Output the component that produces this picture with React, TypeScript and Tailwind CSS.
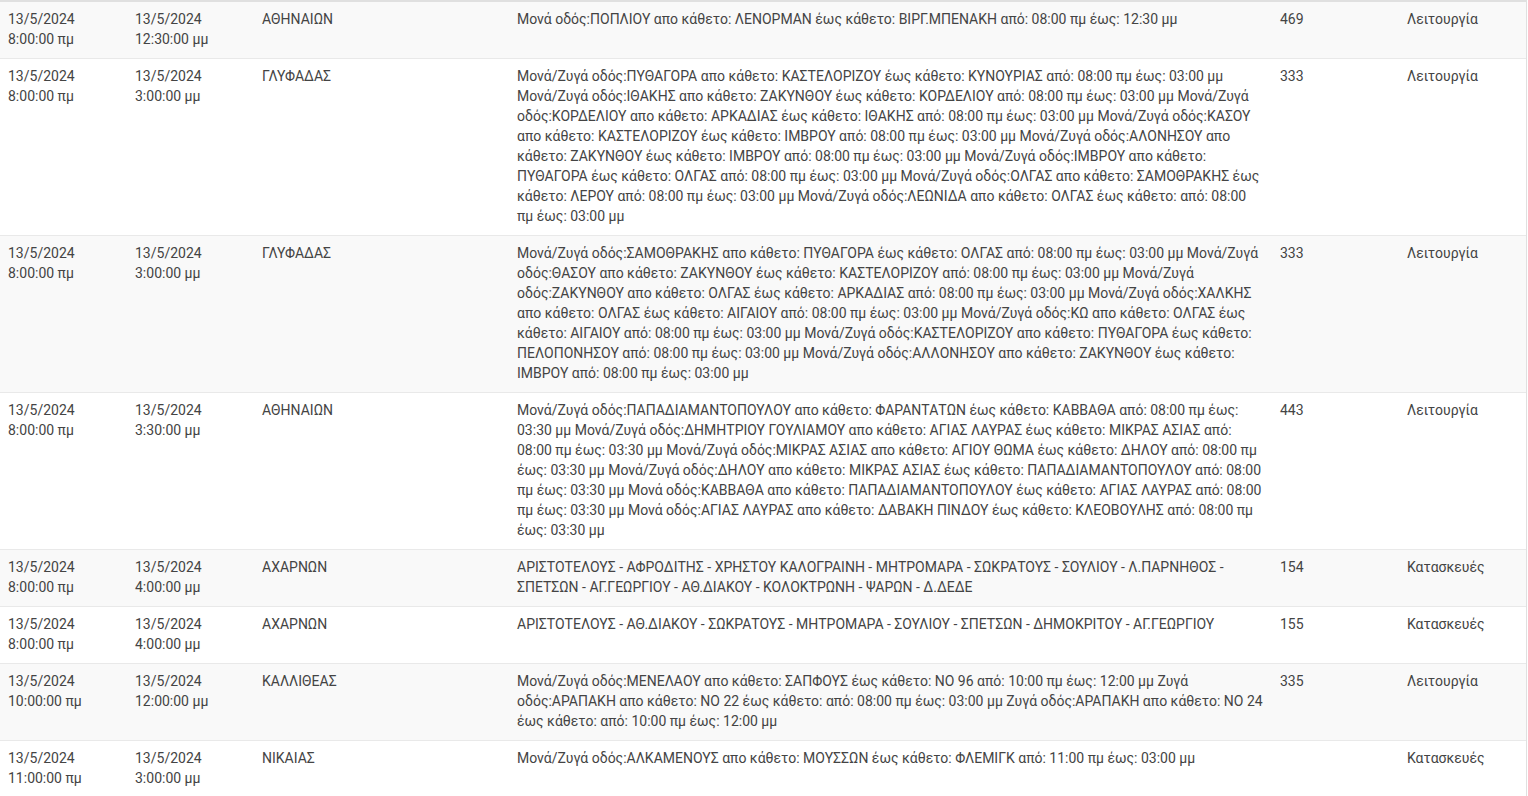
type Row = {
  from: [string, string];
  to: [string, string];
  area: string;
  desc: string;
  num: string;
  kind: string;
};

const rows: Row[] = [
  {
    from: ['13/5/2024', '8:00:00 πμ'],
    to: ['13/5/2024', '12:30:00 μμ'],
    area: 'ΑΘΗΝΑΙΩΝ',
    desc: 'Μονά οδός:ΠΟΠΛΙΟΥ απο κάθετο: ΛΕΝΟΡΜΑΝ έως κάθετο: ΒΙΡΓ.ΜΠΕΝΑΚΗ από: 08:00 πμ έως: 12:30 μμ',
    num: '469',
    kind: 'Λειτουργία',
  },
  {
    from: ['13/5/2024', '8:00:00 πμ'],
    to: ['13/5/2024', '3:00:00 μμ'],
    area: 'ΓΛΥΦΑΔΑΣ',
    desc: 'Μονά/Ζυγά οδός:ΠΥΘΑΓΟΡΑ απο κάθετο: ΚΑΣΤΕΛΟΡΙΖΟΥ έως κάθετο: ΚΥΝΟΥΡΙΑΣ από: 08:00 πμ έως: 03:00 μμ Μονά/Ζυγά οδός:ΙΘΑΚΗΣ απο κάθετο: ΖΑΚΥΝΘΟΥ έως κάθετο: ΚΟΡΔΕΛΙΟΥ από: 08:00 πμ έως: 03:00 μμ Μονά/Ζυγά οδός:ΚΟΡΔΕΛΙΟΥ απο κάθετο: ΑΡΚΑΔΙΑΣ έως κάθετο: ΙΘΑΚΗΣ από: 08:00 πμ έως: 03:00 μμ Μονά/Ζυγά οδός:ΚΑΣΟΥ απο κάθετο: ΚΑΣΤΕΛΟΡΙΖΟΥ έως κάθετο: ΙΜΒΡΟΥ από: 08:00 πμ έως: 03:00 μμ Μονά/Ζυγά οδός:ΑΛΟΝΗΣΟΥ απο κάθετο: ΖΑΚΥΝΘΟΥ έως κάθετο: ΙΜΒΡΟΥ από: 08:00 πμ έως: 03:00 μμ Μονά/Ζυγά οδός:ΙΜΒΡΟΥ απο κάθετο: ΠΥΘΑΓΟΡΑ έως κάθετο: ΟΛΓΑΣ από: 08:00 πμ έως: 03:00 μμ Μονά/Ζυγά οδός:ΟΛΓΑΣ απο κάθετο: ΣΑΜΟΘΡΑΚΗΣ έως κάθετο: ΛΕΡΟΥ από: 08:00 πμ έως: 03:00 μμ Μονά/Ζυγά οδός:ΛΕΩΝΙΔΑ απο κάθετο: ΟΛΓΑΣ έως κάθετο: από: 08:00 πμ έως: 03:00 μμ',
    num: '333',
    kind: 'Λειτουργία',
  },
  {
    from: ['13/5/2024', '8:00:00 πμ'],
    to: ['13/5/2024', '3:00:00 μμ'],
    area: 'ΓΛΥΦΑΔΑΣ',
    desc: 'Μονά/Ζυγά οδός:ΣΑΜΟΘΡΑΚΗΣ απο κάθετο: ΠΥΘΑΓΟΡΑ έως κάθετο: ΟΛΓΑΣ από: 08:00 πμ έως: 03:00 μμ Μονά/Ζυγά οδός:ΘΑΣΟΥ απο κάθετο: ΖΑΚΥΝΘΟΥ έως κάθετο: ΚΑΣΤΕΛΟΡΙΖΟΥ από: 08:00 πμ έως: 03:00 μμ Μονά/Ζυγά οδός:ΖΑΚΥΝΘΟΥ απο κάθετο: ΟΛΓΑΣ έως κάθετο: ΑΡΚΑΔΙΑΣ από: 08:00 πμ έως: 03:00 μμ Μονά/Ζυγά οδός:ΧΑΛΚΗΣ απο κάθετο: ΟΛΓΑΣ έως κάθετο: ΑΙΓΑΙΟΥ από: 08:00 πμ έως: 03:00 μμ Μονά/Ζυγά οδός:ΚΩ απο κάθετο: ΟΛΓΑΣ έως κάθετο: ΑΙΓΑΙΟΥ από: 08:00 πμ έως: 03:00 μμ Μονά/Ζυγά οδός:ΚΑΣΤΕΛΟΡΙΖΟΥ απο κάθετο: ΠΥΘΑΓΟΡΑ έως κάθετο: ΠΕΛΟΠΟΝΗΣΟΥ από: 08:00 πμ έως: 03:00 μμ Μονά/Ζυγά οδός:ΑΛΛΟΝΗΣΟΥ απο κάθετο: ΖΑΚΥΝΘΟΥ έως κάθετο: ΙΜΒΡΟΥ από: 08:00 πμ έως: 03:00 μμ',
    num: '333',
    kind: 'Λειτουργία',
  },
  {
    from: ['13/5/2024', '8:00:00 πμ'],
    to: ['13/5/2024', '3:30:00 μμ'],
    area: 'ΑΘΗΝΑΙΩΝ',
    desc: 'Μονά/Ζυγά οδός:ΠΑΠΑΔΙΑΜΑΝΤΟΠΟΥΛΟΥ απο κάθετο: ΦΑΡΑΝΤΑΤΩΝ έως κάθετο: ΚΑΒΒΑΘΑ από: 08:00 πμ έως: 03:30 μμ Μονά/Ζυγά οδός:ΔΗΜΗΤΡΙΟΥ ΓΟΥΛΙΑΜΟΥ απο κάθετο: ΑΓΙΑΣ ΛΑΥΡΑΣ έως κάθετο: ΜΙΚΡΑΣ ΑΣΙΑΣ από: 08:00 πμ έως: 03:30 μμ Μονά/Ζυγά οδός:ΜΙΚΡΑΣ ΑΣΙΑΣ απο κάθετο: ΑΓΙΟΥ ΘΩΜΑ έως κάθετο: ΔΗΛΟΥ από: 08:00 πμ έως: 03:30 μμ Μονά/Ζυγά οδός:ΔΗΛΟΥ απο κάθετο: ΜΙΚΡΑΣ ΑΣΙΑΣ έως κάθετο: ΠΑΠΑΔΙΑΜΑΝΤΟΠΟΥΛΟΥ από: 08:00 πμ έως: 03:30 μμ Μονά οδός:ΚΑΒΒΑΘΑ απο κάθετο: ΠΑΠΑΔΙΑΜΑΝΤΟΠΟΥΛΟΥ έως κάθετο: ΑΓΙΑΣ ΛΑΥΡΑΣ από: 08:00 πμ έως: 03:30 μμ Μονά οδός:ΑΓΙΑΣ ΛΑΥΡΑΣ απο κάθετο: ΔΑΒΑΚΗ ΠΙΝΔΟΥ έως κάθετο: ΚΛΕΟΒΟΥΛΗΣ από: 08:00 πμ έως: 03:30 μμ',
    num: '443',
    kind: 'Λειτουργία',
  },
  {
    from: ['13/5/2024', '8:00:00 πμ'],
    to: ['13/5/2024', '4:00:00 μμ'],
    area: 'ΑΧΑΡΝΩΝ',
    desc: 'ΑΡΙΣΤΟΤΕΛΟΥΣ - ΑΦΡΟΔΙΤΗΣ - ΧΡΗΣΤΟΥ ΚΑΛΟΓΡΑΙΝΗ - ΜΗΤΡΟΜΑΡΑ - ΣΩΚΡΑΤΟΥΣ - ΣΟΥΛΙΟΥ - Λ.ΠΑΡΝΗΘΟΣ - ΣΠΕΤΣΩΝ - ΑΓ.ΓΕΩΡΓΙΟΥ - ΑΘ.ΔΙΑΚΟΥ - ΚΟΛΟΚΤΡΩΝΗ - ΨΑΡΩΝ - Δ.ΔΕΔΕ',
    num: '154',
    kind: 'Κατασκευές',
  },
  {
    from: ['13/5/2024', '8:00:00 πμ'],
    to: ['13/5/2024', '4:00:00 μμ'],
    area: 'ΑΧΑΡΝΩΝ',
    desc: 'ΑΡΙΣΤΟΤΕΛΟΥΣ - ΑΘ.ΔΙΑΚΟΥ - ΣΩΚΡΑΤΟΥΣ - ΜΗΤΡΟΜΑΡΑ - ΣΟΥΛΙΟΥ - ΣΠΕΤΣΩΝ - ΔΗΜΟΚΡΙΤΟΥ - ΑΓ.ΓΕΩΡΓΙΟΥ',
    num: '155',
    kind: 'Κατασκευές',
  },
  {
    from: ['13/5/2024', '10:00:00 πμ'],
    to: ['13/5/2024', '12:00:00 μμ'],
    area: 'ΚΑΛΛΙΘΕΑΣ',
    desc: 'Μονά/Ζυγά οδός:ΜΕΝΕΛΑΟΥ απο κάθετο: ΣΑΠΦΟΥΣ έως κάθετο: ΝΟ 96 από: 10:00 πμ έως: 12:00 μμ Ζυγά οδός:ΑΡΑΠΑΚΗ απο κάθετο: ΝΟ 22 έως κάθετο: από: 08:00 πμ έως: 03:00 μμ Ζυγά οδός:ΑΡΑΠΑΚΗ απο κάθετο: ΝΟ 24 έως κάθετο: από: 10:00 πμ έως: 12:00 μμ',
    num: '335',
    kind: 'Λειτουργία',
  },
  {
    from: ['13/5/2024', '11:00:00 πμ'],
    to: ['13/5/2024', '3:00:00 μμ'],
    area: 'ΝΙΚΑΙΑΣ',
    desc: 'Μονά/Ζυγά οδός:ΑΛΚΑΜΕΝΟΥΣ απο κάθετο: ΜΟΥΣΣΩΝ έως κάθετο: ΦΛΕΜΙΓΚ από: 11:00 πμ έως: 03:00 μμ',
    num: '',
    kind: 'Κατασκευές',
  },
];

export default function App() {
  return (
    <div className="min-h-screen bg-white font-['Roboto','Liberation_Sans',sans-serif] text-[14px] leading-5 text-[#444]">
      <div className="w-[1527px] border-t-2 border-r border-[#e0e0e0]">
        {rows.map((r, i) => (
          <div
            key={i}
            className={`grid grid-cols-[127px_127px_255px_763px_127px_1fr] border-b border-[#e9e9e9] ${
              i % 2 === 0 ? 'bg-[#f9f9f9]' : 'bg-white'
            }`}
          >
            <div className="px-2 pt-[7px] pb-[9px]">
              <div>{r.from[0]}</div>
              <div>{r.from[1]}</div>
            </div>
            <div className="px-2 pt-[7px] pb-[9px]">
              <div>{r.to[0]}</div>
              <div>{r.to[1]}</div>
            </div>
            <div className="px-2 pt-[7px] pb-[9px]">{r.area}</div>
            <div className="px-2 pt-[7px] pb-[9px]">{r.desc}</div>
            <div className="px-2 pt-[7px] pb-[9px]">{r.num}</div>
            <div className="px-2 pt-[7px] pb-[9px]">{r.kind}</div>
          </div>
        ))}
      </div>
    </div>
  );
}
